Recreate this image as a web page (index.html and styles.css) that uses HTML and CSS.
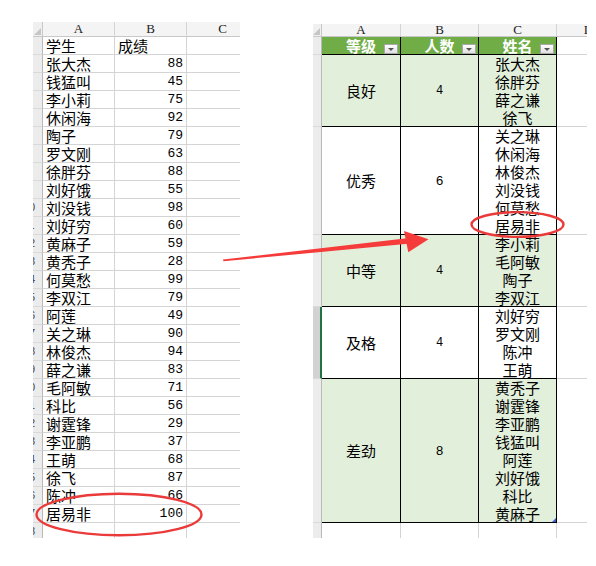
FILE: index.html
```html
<!DOCTYPE html>
<html lang="zh-CN">
<head>
<meta charset="utf-8">
<title>成绩分级</title>
<link rel="stylesheet" href="styles.css">
</head>
<body>
<div class="page">
  <div class="sheet sheet-left">
    <div class="grid-left">
      <div class="corner"></div><div class="colh">A</div><div class="colh">B</div><div class="colh">C</div>
      <div class="rowh"><span>1</span></div><div class="cell">学生</div><div class="cell">成绩</div><div class="cell"></div>
      <div class="rowh"><span>2</span></div><div class="cell">张大杰</div><div class="cell num">88</div><div class="cell"></div>
      <div class="rowh"><span>3</span></div><div class="cell">钱猛叫</div><div class="cell num">45</div><div class="cell"></div>
      <div class="rowh"><span>4</span></div><div class="cell">李小莉</div><div class="cell num">75</div><div class="cell"></div>
      <div class="rowh"><span>5</span></div><div class="cell">休闲海</div><div class="cell num">92</div><div class="cell"></div>
      <div class="rowh"><span>6</span></div><div class="cell">陶子</div><div class="cell num">79</div><div class="cell"></div>
      <div class="rowh"><span>7</span></div><div class="cell">罗文刚</div><div class="cell num">63</div><div class="cell"></div>
      <div class="rowh"><span>8</span></div><div class="cell">徐胖芬</div><div class="cell num">88</div><div class="cell"></div>
      <div class="rowh"><span>9</span></div><div class="cell">刘好饿</div><div class="cell num">55</div><div class="cell"></div>
      <div class="rowh"><span>10</span></div><div class="cell">刘没钱</div><div class="cell num">98</div><div class="cell"></div>
      <div class="rowh"><span>11</span></div><div class="cell">刘好穷</div><div class="cell num">60</div><div class="cell"></div>
      <div class="rowh"><span>12</span></div><div class="cell">黄麻子</div><div class="cell num">59</div><div class="cell"></div>
      <div class="rowh"><span>13</span></div><div class="cell">黄秃子</div><div class="cell num">28</div><div class="cell"></div>
      <div class="rowh"><span>14</span></div><div class="cell">何莫愁</div><div class="cell num">99</div><div class="cell"></div>
      <div class="rowh"><span>15</span></div><div class="cell">李双江</div><div class="cell num">79</div><div class="cell"></div>
      <div class="rowh"><span>16</span></div><div class="cell">阿莲</div><div class="cell num">49</div><div class="cell"></div>
      <div class="rowh"><span>17</span></div><div class="cell">关之琳</div><div class="cell num">90</div><div class="cell"></div>
      <div class="rowh"><span>18</span></div><div class="cell">林俊杰</div><div class="cell num">94</div><div class="cell"></div>
      <div class="rowh"><span>19</span></div><div class="cell">薛之谦</div><div class="cell num">83</div><div class="cell"></div>
      <div class="rowh"><span>20</span></div><div class="cell">毛阿敏</div><div class="cell num">71</div><div class="cell"></div>
      <div class="rowh"><span>21</span></div><div class="cell">科比</div><div class="cell num">56</div><div class="cell"></div>
      <div class="rowh"><span>22</span></div><div class="cell">谢霆锋</div><div class="cell num">29</div><div class="cell"></div>
      <div class="rowh"><span>23</span></div><div class="cell">李亚鹏</div><div class="cell num">37</div><div class="cell"></div>
      <div class="rowh"><span>24</span></div><div class="cell">王萌</div><div class="cell num">68</div><div class="cell"></div>
      <div class="rowh"><span>25</span></div><div class="cell">徐飞</div><div class="cell num">87</div><div class="cell"></div>
      <div class="rowh"><span>26</span></div><div class="cell">陈冲</div><div class="cell num">66</div><div class="cell"></div>
      <div class="rowh"><span>27</span></div><div class="cell">居易非</div><div class="cell num">100</div><div class="cell"></div>
      <div class="rowh"><span>28</span></div><div class="cell"></div><div class="cell"></div><div class="cell"></div>
    </div>
  </div>

  <div class="sheet sheet-right">
    <div class="grid-right">
      <div class="corner"></div><div class="colh">A</div><div class="colh">B</div><div class="colh">C</div><div class="colh colh-d">D</div>

      <div class="rowh"></div>
      <div class="th">等级<span class="filter"></span></div>
      <div class="th">人数<span class="filter"></span></div>
      <div class="th">姓名<span class="filter"></span></div>
      <div class="gcell"></div>

      <div class="rowh"></div>
      <div class="tc green">良好</div>
      <div class="tc green digit">4</div>
      <div class="tc green names"><span>张大杰</span><span>徐胖芬</span><span>薛之谦</span><span>徐飞</span></div>
      <div class="gcell"></div>

      <div class="rowh"></div>
      <div class="tc">优秀</div>
      <div class="tc sans-digit">6</div>
      <div class="tc names"><span>关之琳</span><span>休闲海</span><span>林俊杰</span><span>刘没钱</span><span>何莫愁</span><span>居易非</span></div>
      <div class="gcell"></div>

      <div class="rowh"></div>
      <div class="tc green">中等</div>
      <div class="tc green digit">4</div>
      <div class="tc green names"><span>李小莉</span><span>毛阿敏</span><span>陶子</span><span>李双江</span></div>
      <div class="gcell"></div>

      <div class="rowh rowh-sel"></div>
      <div class="tc">及格</div>
      <div class="tc digit">4</div>
      <div class="tc names"><span>刘好穷</span><span>罗文刚</span><span>陈冲</span><span>王萌</span></div>
      <div class="gcell"></div>

      <div class="rowh"></div>
      <div class="tc green">差劲</div>
      <div class="tc green sans-digit">8</div>
      <div class="tc green names last"><span>黄秃子</span><span>谢霆锋</span><span>李亚鹏</span><span>钱猛叫</span><span>阿莲</span><span>刘好饿</span><span>科比</span><span>黄麻子</span></div>
      <div class="gcell"></div>

      <div class="rowh rowh-end"></div>
      <div class="ecell"></div><div class="ecell"></div><div class="ecell"></div><div class="ecell ecell-d"></div>
    </div>
  </div>

  <svg class="overlay" width="596" height="566" viewBox="0 0 596 566">
    <polygon class="mark" points="223,259.6 407,238.3 408,243.8 223.4,261.2"/>
    <polygon class="mark" points="404,231 428.5,239.3 408.3,252.3"/>
    <ellipse class="ring" cx="119" cy="514.5" rx="82.5" ry="20.8"/>
    <ellipse class="ring" cx="517.5" cy="224.5" rx="46" ry="12.4"/>
  </svg>
</div>
</body>
</html>
```

FILE: styles.css
```css
html, body {
  margin: 0;
  padding: 0;
  background: #ffffff;
}

.page {
  position: relative;
  width: 596px;
  height: 566px;
  box-sizing: border-box;
  padding: 22px 0 0 33px;
  display: flex;
  align-items: flex-start;
  gap: 73px;
  font-family: "Noto Sans CJK SC", "Noto Sans", sans-serif;
  color: #000;
  overflow: hidden;
}

.sheet {
  overflow: hidden;
  background: #fff;
}

.sheet-left {
  width: 207px;
  height: 516px;
}

.sheet-right {
  width: 274px;
  height: 514px;
  margin-top: 2px;
}

/* ---------- shared header bits ---------- */
.corner {
  position: relative;
  background: #f0f0f0;
  border-right: 1px solid #c8c8c8;
  border-bottom: 1px solid #c8c8c8;
  box-sizing: border-box;
}
.corner::after {
  content: "";
  position: absolute;
  right: 1px;
  bottom: 1px;
  width: 0;
  height: 0;
  border-left: 7px solid transparent;
  border-bottom: 7px solid #c6c6c6;
}

.colh {
  box-sizing: border-box;
  background: #f4f4f4;
  border-right: 1px solid #d4d4d4;
  border-bottom: 1px solid #c8c8c8;
  font-family: "Liberation Serif", serif;
  font-size: 13px;
  line-height: 14px;
  color: #222;
  text-align: center;
  overflow: hidden;
  white-space: nowrap;
}

.rowh {
  box-sizing: border-box;
  background: #ececec;
  border-right: 1px solid #b9b9b9;
  border-bottom: 1px solid #d9d9d9;
  overflow: hidden;
  display: flex;
}
.rowh span {
  flex: none;
  width: 26px;
  margin-left: -17px;
  text-align: center;
  font-family: "Liberation Sans", sans-serif;
  font-size: 11px;
  line-height: 17px;
  color: #444;
}

/* ---------- left sheet ---------- */
.grid-left {
  display: grid;
  grid-template-columns: 10px 72px 72px 72px;
  grid-template-rows: 15px;
  grid-auto-rows: 18px;
  width: 226px;
}

.cell {
  box-sizing: border-box;
  border-right: 1px solid #d4d4d4;
  border-bottom: 1px solid #d4d4d4;
  padding: 0 3px;
  font-size: 15px;
  line-height: 17px;
  white-space: nowrap;
  overflow: hidden;
}
.cell.num {
  text-align: right;
  font-family: "Liberation Mono", monospace;
  font-size: 13px;
  line-height: 18px;
}

/* ---------- right sheet ---------- */
.grid-right {
  display: grid;
  grid-template-columns: 9px 79px 78px 78px 63px;
  grid-template-rows: 13px 18px 72px 108px 72px 72px 144px 16px;
  width: 307px;
}
.grid-right .colh {
  line-height: 12px;
}
.colh-d {
  border-right: none;
}

.th {
  position: relative;
  box-sizing: border-box;
  background: #70ad47;
  border-right: 1px solid #000;
  border-bottom: 1px solid #000;
  color: #fff;
  font-weight: bold;
  font-size: 15px;
  line-height: 17px;
  text-align: center;
  white-space: nowrap;
}

.filter {
  position: absolute;
  right: 2px;
  bottom: 0;
  width: 14px;
  height: 10px;
  box-sizing: border-box;
  border: 1px solid #a8a8a8;
  background: linear-gradient(#ffffff, #e0e0e0);
}
.filter::after {
  content: "";
  position: absolute;
  left: 3px;
  top: 3px;
  width: 0;
  height: 0;
  border-left: 3px solid transparent;
  border-right: 3px solid transparent;
  border-top: 3px solid #555;
}

.tc {
  position: relative;
  box-sizing: border-box;
  border-right: 1px solid #000;
  border-bottom: 1px solid #000;
  display: flex;
  align-items: center;
  justify-content: center;
  font-size: 15px;
  line-height: 18px;
  white-space: nowrap;
}
.tc.green {
  background: #e2efda;
}
.tc.digit {
  font-family: "Liberation Mono", monospace;
  font-size: 12px;
}
.tc.sans-digit {
  font-family: "Liberation Sans", sans-serif;
  font-size: 13px;
}
.tc.names {
  flex-direction: column;
  justify-content: flex-start;
}
.tc.names span {
  display: block;
  height: 18px;
  line-height: 18px;
}
.tc.names.last::after {
  content: "";
  position: absolute;
  right: 0;
  bottom: 0;
  width: 0;
  height: 0;
  border-left: 4px solid transparent;
  border-bottom: 4px solid #3b5ccc;
}

.gcell {
  box-sizing: border-box;
  border-bottom: 1px solid #d4d4d4;
}

.rowh-sel {
  background: #d2d2d2;
  border-right: 2px solid #217346;
}
.rowh-end {
  border-bottom: none;
}

.ecell {
  box-sizing: border-box;
  border-right: 1px solid #d4d4d4;
}
.ecell-d {
  border-right: none;
}

/* ---------- annotation overlay ---------- */
.overlay {
  position: absolute;
  left: 0;
  top: 0;
  pointer-events: none;
}
.mark {
  fill: #f63b3b;
}
.ring {
  fill: none;
  stroke: #ea3a3a;
  stroke-width: 2.4;
}
```
